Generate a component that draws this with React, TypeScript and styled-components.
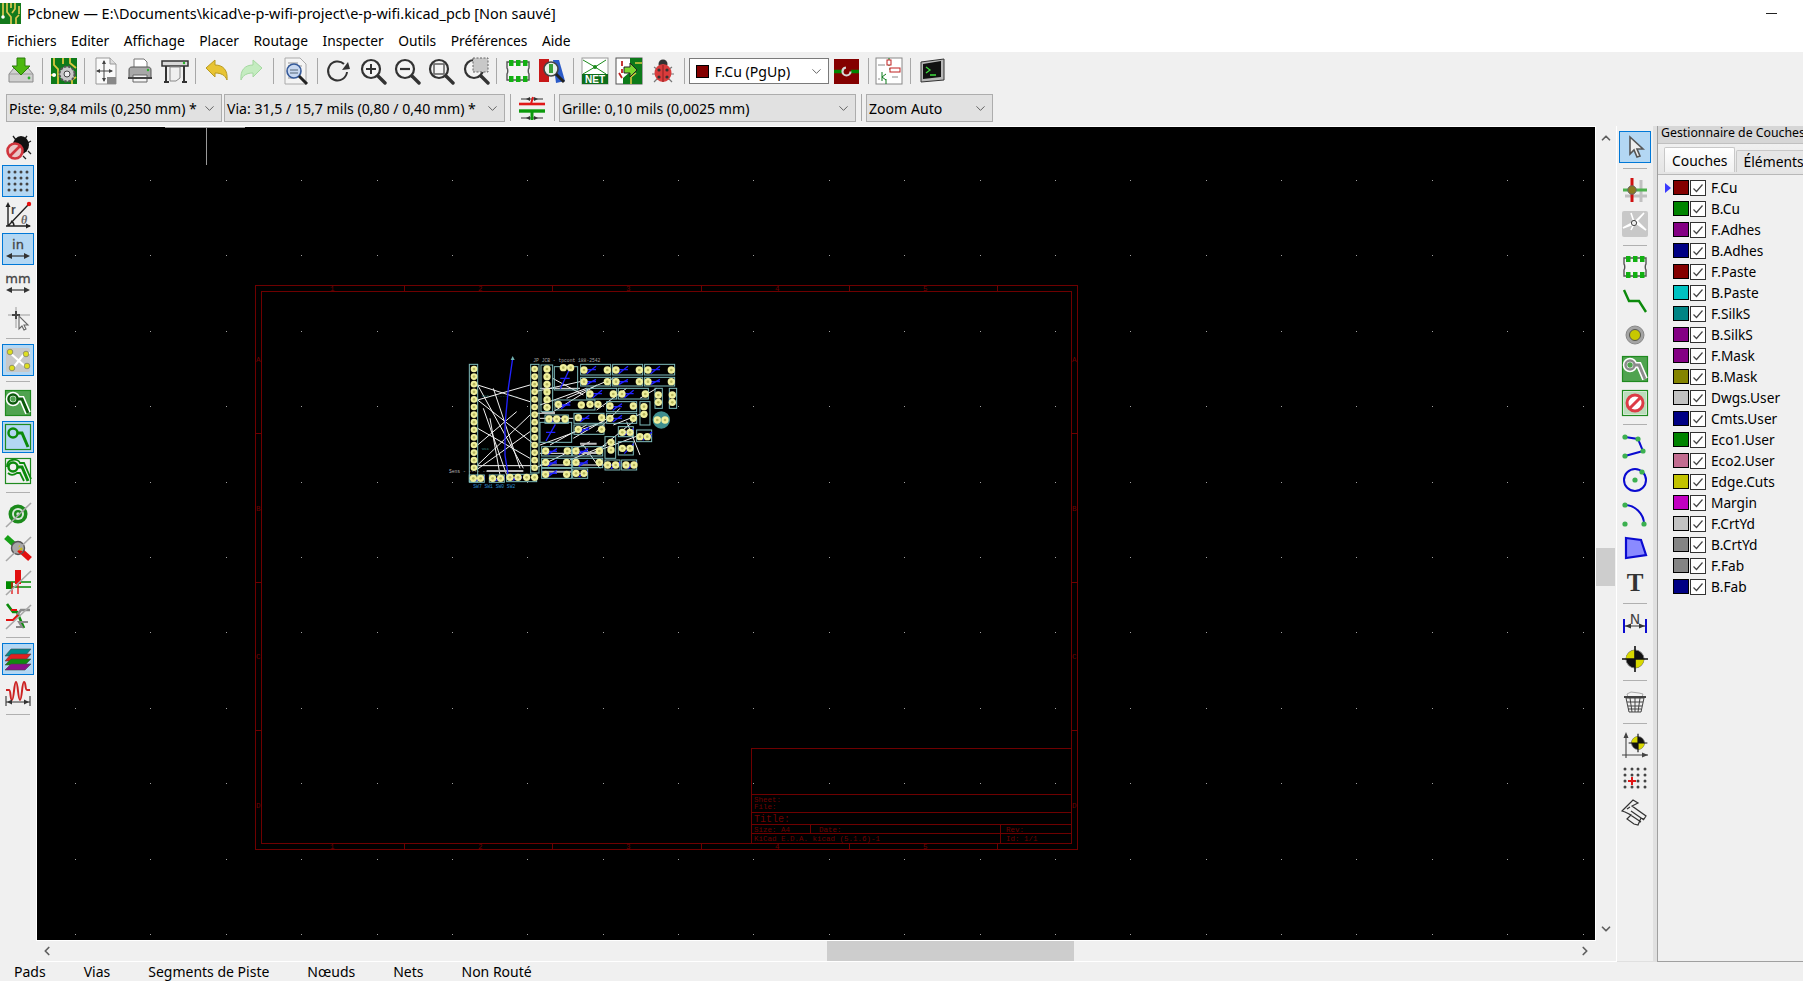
import React, { ReactNode } from "react"
import { ChevronDown, ChevronLeft, ChevronRight, ChevronUp } from "lucide-react"
import styled, { createGlobalStyle } from "styled-components"

const UI_FONT = `"Noto Sans", "Open Sans", sans-serif`

const GlobalStyle = createGlobalStyle`
  html, body { margin: 0; padding: 0; background: #f0f0f0; overflow: hidden; }
  body { font-family: ${UI_FONT}; color: #000; }
  * { box-sizing: border-box; }
`

const Window = styled.div`
  width: 1803px;
  height: 981px;
  display: flex;
  flex-direction: column;
  overflow: hidden;
  background: #f0f0f0;
`
const TitleBar = styled.div`
  height: 26px;
  flex: none;
  background: #fff;
  display: flex;
  align-items: center;
  font-size: 14.45px;
  padding: 1px 26px 0 0;
  svg { flex: none; margin-right: 6px; }
`
const TitleText = styled.span`
  flex: 1;
`
const Minimize = styled.span`
  width: 11px;
  height: 1px;
  background: #222;
`
const MenuBar = styled.div`
  height: 26px;
  flex: none;
  background: #fff;
  display: flex;
  align-items: center;
  padding: 3px 0 0 7px;
  gap: 14.5px;
  font-size: 13.8px;
`
const MainToolbar = styled.div`
  height: 38px;
  flex: none;
  display: flex;
  align-items: center;
  padding-left: 4px;
`
const AuxToolbar = styled.div`
  height: 36px;
  flex: none;
  display: flex;
  align-items: flex-start;
  padding: 4px 0 0 6px;
`
const HButton = styled.span`
  width: 34.2px;
  height: 32px;
  flex: none;
  display: flex;
  align-items: center;
  justify-content: center;
`
const HSep = styled.span<{ $wide?: boolean }>`
  width: ${(p) => (p.$wide ? 10.7 : 8.4)}px;
  height: 26px;
  flex: none;
  display: flex;
  justify-content: center;
  &::before { content: ""; width: 1px; background: #a8a8a8; }
`
const Combo = styled.div<{ $width: number; $white?: boolean; $after?: number }>`
  width: ${(p) => p.$width}px;
  height: 28px;
  flex: none;
  margin-right: ${(p) => p.$after ?? 0}px;
  display: flex;
  align-items: center;
  justify-content: space-between;
  padding: 0 4px 0 2px;
  font-size: 14.1px;
  white-space: nowrap;
  background: ${(p) => (p.$white ? "#fff" : "#e1e1e1")};
  border: ${(p) => (p.$white ? "1px solid #7a7a7a" : "1px solid #adadad")};
  svg { color: #444; flex: none; }
`
const LayerCombo = styled(Combo)`
  height: 26px;
  margin: 0 1px 0 0;
  padding-left: 6px;
`
const ComboLabel = styled.span`
  display: flex;
  align-items: center;
  gap: 6px;
`
const ComboSwatch = styled.span`
  width: 13px;
  height: 13px;
  background: #840000;
  border: 1px solid #000;
`
const AuxSep = styled.span`
  width: 10px;
  height: 27px;
  flex: none;
  display: flex;
  justify-content: center;
  &::before { content: ""; width: 1px; background: #a8a8a8; }
`
const AuxIcon = styled.span`
  width: 34px;
  height: 28px;
  flex: none;
  display: flex;
  align-items: center;
  justify-content: center;
`
const Body = styled.div`
  height: 836px;
  flex: none;
  display: flex;
`
const SideToolbar = styled.div`
  width: 36px;
  flex: none;
  padding-top: 4px;
  display: flex;
  flex-direction: column;
  align-items: center;
`
const RightToolbar = styled(SideToolbar)`
  border-bottom: 1px solid #e0e0e0;
`
const SideButton = styled.span<{ $active?: boolean }>`
  width: 32px;
  height: 32px;
  margin: 1px 0;
  flex: none;
  display: flex;
  align-items: center;
  justify-content: center;
  background: ${(p) => (p.$active ? "#b3d7f3" : "transparent")};
  border: 1px solid ${(p) => (p.$active ? "#0078d7" : "transparent")};
`
const SideSep = styled.span`
  width: 24px;
  height: 1px;
  margin: 4px 0;
  flex: none;
  background: #b0b0b0;
`
const CanvasFrame = styled.div`
  width: 1581px;
  flex: none;
  display: grid;
  grid-template-columns: 1fr 20px;
  grid-template-rows: 1fr 20px;
  border-right: 1px solid #fff;
  border-bottom: 1px solid #fff;
`
const Canvas = styled.div`
  background: #000;
  border: 1px solid #fff;
  overflow: hidden;
  svg { display: block; }
`
const VScroll = styled.div`
  position: relative;
  display: flex;
  flex-direction: column;
  align-items: center;
  justify-content: space-between;
  padding: 5px 0;
  color: #606060;
`
const VThumb = styled.span`
  position: absolute;
  top: 422px;
  left: 0;
  width: 19px;
  height: 38px;
  background: #cdcdcd;
`
const HScroll = styled.div`
  position: relative;
  display: flex;
  align-items: center;
  justify-content: space-between;
  padding: 0 4px;
  color: #606060;
`
const HThumb = styled.span`
  position: absolute;
  left: 791px;
  top: 0;
  width: 247px;
  height: 20px;
  background: #cdcdcd;
`
const Sash = styled.div`
  width: 4px;
  flex: none;
  background: #e0e0e0;
`
const LayerPanel = styled.div`
  flex: 1;
  min-width: 0;
  overflow: hidden;
  display: flex;
  flex-direction: column;
  border-left: 1px solid #a0a0a0;
  border-bottom: 1px solid #a0a0a0;
`
const PanelCaption = styled.div`
  height: 17px;
  flex: none;
  padding-left: 3px;
  font-size: 12.3px;
  line-height: 13px;
  white-space: nowrap;
  background: #d6d6d6;
`
const TabRow = styled.div`
  height: 32px;
  flex: none;
  display: flex;
  align-items: flex-end;
  padding: 0 0 2px 6px;
  border-top: 1px solid #c0c0c0;
  border-bottom: 1px solid #b8b8b8;
  background: linear-gradient(#f0f0f0, #e4e4e4);
`
const Tab = styled.div<{ $active?: boolean }>`
  height: ${(p) => (p.$active ? 25 : 22)}px;
  padding: 0 6px 0 7px;
  margin-right: 1px;
  font-size: 13.9px;
  display: flex;
  align-items: center;
  white-space: nowrap;
  border: 1px solid #c8c8c8;
  border-bottom: none;
  border-radius: 2px 2px 0 0;
  background: ${(p) => (p.$active ? "linear-gradient(#fff, #f0f0f0)" : "#e6e6e6")};
`
const LayerList = styled.div`
  padding: 2px 0 0 7px;
`
const LayerRow = styled.div`
  height: 21.03px;
  display: flex;
  align-items: center;
  font-size: 13.7px;
`
const ActiveMark = styled.span<{ $on: boolean }>`
  width: 0;
  height: 0;
  flex: none;
  margin-right: 2px;
  border-top: 5px solid transparent;
  border-bottom: 5px solid transparent;
  border-left: 6px solid ${(p) => (p.$on ? "#3a3aff" : "transparent")};
`
const Swatch = styled.span<{ $color: string }>`
  width: 16px;
  height: 15px;
  flex: none;
  background: ${(p) => p.$color};
  border: 1px solid #000;
`
const Check = styled.span`
  width: 16px;
  height: 16px;
  flex: none;
  margin: 0 5px 0 1px;
  display: flex;
  align-items: center;
  justify-content: center;
  background: #fff;
  border: 1px solid #333;
`
const StatusBar = styled.div`
  height: 19px;
  flex: none;
  display: flex;
  align-items: center;
  padding-left: 14px;
  gap: 38px;
  font-size: 14px;
`

const Svg = ({ children, size = 28 }: { children: ReactNode; size?: number }) => (
  <svg width={size} height={size} viewBox="0 0 28 28" fill="none">
    {children}
  </svg>
)

const Magnifier = ({ children }: { children?: ReactNode }) => (
  <Svg>
    <circle cx="12" cy="12" r="9" fill="#f4f4f4" stroke="#333" strokeWidth="2.2" />
    <path d="M19 19l7 7" stroke="#333" strokeWidth="3.4" strokeLinecap="round" />
    {children}
  </Svg>
)

const Ladybug = () => (
  <Svg>
    <path d="M5 10l4 3M23 10l-4 3M3 17h5M25 17h-5M5 25l4-4M23 25l-4-4" stroke="#777" strokeWidth="1.2" />
    <circle cx="14" cy="7" r="4.5" fill="#333" />
    <ellipse cx="14" cy="16" rx="8.5" ry="9" fill="#d93c3c" />
    <path d="M14 8v17" stroke="#8b2020" />
    <circle cx="10" cy="13" r="1.6" fill="#333" />
    <circle cx="18" cy="13" r="1.6" fill="#333" />
    <circle cx="10" cy="20" r="1.6" fill="#333" />
    <circle cx="18" cy="20" r="1.6" fill="#333" />
  </Svg>
)

const BugOff = () => (
  <Svg>
    <path d="M12 7l-3-4M20 7l3-4M22 11l5-3M24 18l3 3M19 23l3 3" stroke="#222" strokeWidth="1.3" />
    <ellipse cx="17" cy="12" rx="8" ry="9" fill="#111" />
    <circle cx="11" cy="18" r="7.5" fill="#e9c6c6" stroke="#d0343c" strokeWidth="2.6" />
    <path d="M6 23l10-10" stroke="#d0343c" strokeWidth="2.6" />
  </Svg>
)

const GridDots = () => (
  <Svg>
    {[5, 11, 17, 23].map((y) =>
      [5, 11, 17, 23].map((x) => <circle key={`${x}-${y}`} cx={x} cy={y} r="1.5" fill="#444" />)
    )}
  </Svg>
)

const Polar = () => (
  <Svg>
    <path d="M4 25V4M2 25h24M4 25L24 4M10 25c0-3-1-4-3-5" stroke="#222" strokeWidth="1.4" />
    <path d="M4 1l-2.5 5h5zM27 25l-5-2.5v5z" fill="#222" />
    <circle cx="25" cy="3" r="2.2" fill="#e81010" />
    <text x="7" y="13" fontSize="12" fontWeight="700" fontFamily="Liberation Sans" fill="#444">r</text>
    <text x="17" y="23" fontSize="12" fontWeight="700" fontStyle="italic" fontFamily="Liberation Serif" fill="#666">θ</text>
  </Svg>
)

const UnitIcon = ({ label }: { label: string }) => (
  <Svg>
    <text x="14" y="14" textAnchor="middle" fontSize="13" fontWeight="400" stroke="#444" strokeWidth=".3" fontFamily="DejaVu Sans" fill="#444">{label}</text>
    <path d="M4 21h20" stroke="#333" strokeWidth="1.2" />
    <path d="M2 21l6-3v6zM26 21l-6-3v6z" fill="#333" />
  </Svg>
)

const CursorCross = () => (
  <Svg>
    <path d="M4 12h22M12 4v21" stroke="#b8b8b8" strokeWidth="1.5" />
    <path d="M8 12h8M12 8v8" stroke="#444" strokeWidth="2" />
    <path d="M15 13v13l3-3 2 4 2-1-2-4h4z" fill="#f4f4f4" stroke="#666" strokeWidth="1.1" />
  </Svg>
)

const Ratsnest = () => (
  <Svg>
    <rect x="2" y="2" width="24" height="24" rx="2" fill="#c8c8c8" />
    <path d="M5 6l18 16M9 22l11-14 6-1" stroke="#fff" strokeWidth="2.2" />
    <circle cx="6" cy="6" r="2.8" fill="#dede20" stroke="#666" strokeWidth=".6" />
    <circle cx="22" cy="8" r="2.8" fill="#dede20" stroke="#666" strokeWidth=".6" />
    <circle cx="8" cy="22" r="2.8" fill="#dede20" stroke="#666" strokeWidth=".6" />
    <circle cx="23" cy="20" r="2.8" fill="#dede20" stroke="#666" strokeWidth=".6" />
  </Svg>
)

// pad-and-track glyph: solid zone with a white halo, or open frame with an outline copy
const ZoneIcon = ({ bg, track, halo, outline }: { bg: string; track: string; halo?: boolean; outline?: boolean }) => (
  <Svg>
    <rect x="1.5" y="1.5" width="25" height="25" fill={bg} stroke="#1f8a1f" strokeWidth="1.2" />
    {halo && (
      <>
        <circle cx="9" cy="10" r="5" stroke="#fff" strokeWidth="4.5" />
        <path d="M13 10h5l6 14" stroke="#fff" strokeWidth="6" />
      </>
    )}
    <circle cx="9" cy="10" r="4.5" stroke={track} strokeWidth="2.5" />
    <path d="M13 10h5l6 14" stroke={track} strokeWidth="3" />
    {outline && <path d="M3 10c0-9 11-9 13-4h4l7 16M4 16c3 3 6 2 9 0h3l4 8" stroke={track} strokeWidth="1.8" />}
  </Svg>
)

const SlashFrame = ({ children }: { children: ReactNode }) => (
  <Svg>
    {children}
    <path d="M2 27L27 3" stroke="#a8a8a8" strokeWidth="1.6" />
  </Svg>
)

const ViasOff = () => (
  <SlashFrame>
    <circle cx="14" cy="14" r="9.5" fill="#1b8a1b" />
    <circle cx="14" cy="14" r="6" fill="#d8e8d8" />
    <circle cx="14" cy="14" r="4" fill="#1b8a1b" />
    <circle cx="14" cy="14" r="1.7" fill="#d8e8d8" />
  </SlashFrame>
)

const ViaCross = () => (
  <SlashFrame>
    <path d="M2 3l11 10" stroke="#17a017" strokeWidth="5.5" />
    <path d="M15 15l11 10" stroke="#e21010" strokeWidth="5.5" />
    <circle cx="14" cy="14" r="6.5" fill="#a8a8a8" stroke="#555" strokeWidth="1.4" />
    <path d="M15 11l4 4-5 4z" fill="#c8b820" />
    <path d="M12 16l4 4 3-3z" fill="#e21010" />
  </SlashFrame>
)

const ZoneFill = () => (
  <SlashFrame>
    <rect x="2" y="14" width="7" height="7" fill="#008a00" />
    <path d="M2 14h25M2 19h25" stroke="#008a00" strokeWidth="1.3" />
    <rect x="11" y="2" width="6" height="14" fill="#e21010" />
    <path d="M8 14v12M14 14v12" stroke="#e21010" strokeWidth="1.3" />
  </SlashFrame>
)

const TraceOff = () => (
  <SlashFrame>
    <path d="M3 2l6 8h4l7 16" stroke="#0c8a0c" strokeWidth="2.6" />
    <path d="M26 8h-9l-4 5" stroke="#8a8a8a" strokeWidth="2.6" />
    <path d="M2 18h7l5-5M7 8h6" stroke="#e21010" strokeWidth="2.2" />
    <path d="M12 25h6l-3-5h9" stroke="#8a8a8a" strokeWidth="2.2" />
  </SlashFrame>
)

const LayerStack = () => (
  <Svg>
    <path d="M7 4h20l-6 7H1z" fill="#008a8a" stroke="#444" strokeWidth=".6" />
    <path d="M7 9h20l-6 7H1z" fill="#e02020" stroke="#444" strokeWidth=".6" />
    <path d="M7 14h20l-6 6H1z" fill="#108a10" stroke="#444" strokeWidth=".6" />
    <path d="M7 19h20l-6 6H1z" fill="#8a108a" stroke="#444" strokeWidth=".6" />
  </Svg>
)

const Meander = () => (
  <Svg>
    <path d="M2 11h3c2 0 1 10 3 10s2-18 4-18 2 18 4 18 2-18 4-18 1 8 3 8h3" stroke="#c22" strokeWidth="2" />
    <path d="M2 17v10M26 17v10M2 23h24" stroke="#333" strokeWidth="1.1" />
    <path d="M3 23l5-2.5v5zM25 23l-5-2.5v5z" fill="#333" />
  </Svg>
)

const Pointer = () => (
  <Svg>
    <path d="M9 4v17l4-4 3 7 3-1-3-7h6z" fill="#eee" stroke="#555" strokeWidth="1.6" />
  </Svg>
)

const HighlightNet = () => (
  <Svg>
    <path d="M4 20h22M20 4v22" stroke="#c0c0c0" strokeWidth="3" />
    <path d="M2 14h24" stroke="#4cb04c" strokeWidth="3" />
    <path d="M11 2v24" stroke="#d01010" strokeWidth="3" />
    <circle cx="11" cy="14" r="4.2" fill="#8a7a20" stroke="#666" />
  </Svg>
)

const LocalRats = () => (
  <Svg>
    <rect x="1" y="1" width="26" height="26" rx="2" fill="#c8c8c8" />
    <path d="M10 3l3 9-11 6 13-5 10 7-9-9 7-8-9 9-4 8" stroke="#fff" strokeWidth="1.6" />
    <circle cx="13" cy="13" r="2.6" fill="#eee" stroke="#444" />
  </Svg>
)

const Footprint = () => (
  <Svg>
    <path d="M3 5h22v6c-1 1-1 5 0 6v6H3v-6c1-1 1-5 0-6z" fill="#f4f4f4" stroke="#555" strokeWidth="1.4" />
    {[5, 12, 19].map((x) => (
      <React.Fragment key={x}>
        <rect x={x} y="3" width="4.5" height="6" fill="#12b012" />
        <rect x={x} y="19" width="4.5" height="6" fill="#12b012" />
      </React.Fragment>
    ))}
  </Svg>
)

const GreenTrack = () => (
  <Svg>
    <path d="M3 3l5 11h10l7 11" stroke="#0c8a0c" strokeWidth="2.4" />
  </Svg>
)

const ViaIcon = () => (
  <Svg>
    <circle cx="14" cy="14" r="9" fill="#a4a4a4" stroke="#888" />
    <circle cx="14" cy="14" r="5.5" fill="#c8c800" stroke="#555" />
  </Svg>
)

const Keepout = () => (
  <Svg>
    <rect x="1.5" y="1.5" width="25" height="25" fill="#e8f2e8" stroke="#1f8a1f" strokeWidth="1.2" />
    <rect x="3" y="3" width="22" height="22" fill="#bcdcbc" />
    <circle cx="14" cy="14" r="8" fill="#fff" stroke="#dc3c46" strokeWidth="3" />
    <path d="M8 20l12-12" stroke="#dc3c46" strokeWidth="3" />
  </Svg>
)

const Dot = ({ x, y }: { x: number; y: number }) => <circle cx={x} cy={y} r="2.6" fill="#3cb050" />

const GraphicLine = () => (
  <Svg>
    <path d="M4 5l13 2 5 12-18 5" stroke="#0a0ad0" strokeWidth="2" />
    <Dot x={4} y={5} /><Dot x={17} y={7} /><Dot x={22} y={19} /><Dot x={4} y={24} />
  </Svg>
)

const GraphicCircle = () => (
  <Svg>
    <circle cx="14" cy="14" r="11" stroke="#0a0ad0" strokeWidth="2" />
    <Dot x={14} y={14} /><Dot x={21} y={6} />
  </Svg>
)

const GraphicArc = () => (
  <Svg>
    <path d="M4 5c10 0 19 9 19 19" stroke="#0a0ad0" strokeWidth="2" />
    <Dot x={4} y={5} /><Dot x={4} y={24} /><Dot x={23} y={24} />
  </Svg>
)

const GraphicPoly = () => (
  <Svg>
    <path d="M5 4l15 2 5 15-20 3z" fill="#8a8aff" stroke="#0a0ad0" strokeWidth="2.2" />
  </Svg>
)

const TextTool = () => (
  <Svg>
    <text x="14" y="23" textAnchor="middle" fontSize="25" fontWeight="700" fontFamily="Liberation Serif" fill="#333">T</text>
  </Svg>
)

const Dimension = () => (
  <Svg>
    <text x="14" y="13" textAnchor="middle" fontSize="14" fontFamily="DejaVu Sans" fill="#444">N</text>
    <path d="M3 8v14M25 8v14" stroke="#0a0ad0" strokeWidth="2" />
    <path d="M4 15h20" stroke="#333" />
    <path d="M4 15l6-2.5v5zM24 15l-6-2.5v5z" fill="#333" />
  </Svg>
)

const Target = ({ s = 1 }: { s?: number }) => (
  <g transform={`translate(14 14) scale(${s})`}>
    <circle r="9" fill="#111" stroke="#777" />
    <path d="M0 0V-9A9 9 0 0 0-9 0zM0 0V9A9 9 0 0 0 9 0z" fill="#d8d800" />
    <path d="M-13 0H13M0-13V13" stroke="#111" strokeWidth="1.6" />
  </g>
)

const Trash = () => (
  <Svg>
    <path d="M6 6l4-2 8 1 4 1-1 3H7z" fill="#f4f4f4" stroke="#aaa" />
    <path d="M3 9h22" stroke="#333" strokeWidth="1.8" />
    <path d="M5 10l3 14h12l3-14zM9 10l2 14M14 10v14M19 10l-2 14M6 14h16M7 18h14M7 21h13" stroke="#444" strokeWidth="1" />
  </Svg>
)

const OriginTool = () => (
  <Svg>
    <path d="M5 3v24M1 24h26" stroke="#444" strokeWidth="1.1" />
    <path d="M5 1l-2.5 6h5zM27 24l-6-2.5v5z" fill="#444" />
    <g transform="translate(3 -2)"><Target s={0.72} /></g>
  </Svg>
)

const GridOrigin = () => (
  <Svg>
    {[4, 10, 16, 22].map((y) =>
      [4, 11, 17, 24].map((x) => <circle key={`${x}-${y}`} cx={x} cy={y} r="1.5" fill="#444" />)
    )}
    <path d="M7 16h8M11 12v8" stroke="#e01818" strokeWidth="2" />
  </Svg>
)

const Caliper = () => (
  <Svg>
    <path d="M1 12L12 1l5 3-6 3 14 10-2 3-3-1-3 7-4-1-7-5 4-4-6-3zM6 10l3-2M8 15l12 8M10 12l13 9" stroke="#333" strokeWidth="1.2" />
  </Svg>
)

const SaveIcon = () => (
  <Svg>
    <path d="M2 17l5-6h14l5 6v8H2z" fill="#d0d0d0" stroke="#8a8a8a" />
    <path d="M2 17h24" stroke="#9a9a9a" />
    <path d="M10 1h8v8h5l-9 9-9-9h5z" fill="#4db810" stroke="#2c7c0c" />
    <circle cx="22" cy="21" r="1.4" fill="#2caf2c" />
  </Svg>
)

const BoardSetup = () => (
  <Svg>
    <rect x="1" y="1" width="26" height="26" fill="#0d7a1a" />
    <path d="M4 1v7l4 4v15M13 1v6M20 1v5l6 5M1 18h5M22 27v-4l4-3" stroke="#d8c840" strokeWidth="1.8" />
    <circle cx="4" cy="18" r="2" fill="#fff" />
    <circle cx="17" cy="17" r="7.5" fill="#c8c8c8" stroke="#555" strokeDasharray="2.5 1.5" strokeWidth="2" />
    <circle cx="17" cy="17" r="3" fill="#eee" stroke="#444" />
  </Svg>
)

const PageIcon = () => (
  <Svg>
    <path d="M4 1h14l6 6v20H4z" fill="#fafafa" stroke="#999" />
    <path d="M18 1v6h6" fill="#ddd" stroke="#999" />
    <path d="M12 4v20M5 14h15" stroke="#444" />
    <path d="M12 3l-2 4h4zM12 25l-2-4h4zM4 14l4-2v4zM21 14l-4-2v4z" fill="#444" />
    <rect x="15" y="20" width="9" height="7" fill="#888" />
  </Svg>
)

const PrintIcon = () => (
  <Svg>
    <path d="M8 2h10l3 3v7H8z" fill="#fff" stroke="#777" />
    <path d="M3 13c0-2 1-3 3-3h16c2 0 3 1 3 3v8H3z" fill="#a8a8a8" stroke="#555" />
    <path d="M7 18h14v7H7z" fill="#f4f4f4" stroke="#666" />
    <path d="M2 21h24" stroke="#444" strokeWidth="2" />
    <circle cx="22" cy="13" r="1.2" fill="#2bb32b" />
  </Svg>
)

const PlotIcon = () => (
  <Svg>
    <path d="M1 4h26v5H1z" fill="#d8d8d8" stroke="#333" strokeWidth="1.5" />
    <path d="M5 9v16M23 9v16M3 25h5M21 25h5" stroke="#333" strokeWidth="2" />
    <path d="M9 10h10v11l-4 3H9z" fill="#f0f0f0" stroke="#888" />
    <circle cx="23" cy="6" r="1.2" fill="#28b428" />
  </Svg>
)

const UndoIcon = ({ color, edge, flip }: { color: string; edge: string; flip?: boolean }) => (
  <Svg>
    <path
      d="M3 11l9-8v5c8 0 13 5 12 15-2-5-6-7-12-7v4z"
      fill={color}
      stroke={edge}
      transform={flip ? "translate(28 0) scale(-1 1)" : undefined}
    />
  </Svg>
)

const FindIcon = () => (
  <Svg>
    <path d="M3 1h15l6 6v20H3z" fill="#f4f4f4" stroke="#aaa" />
    <path d="M6 6h10M6 9h14M6 21h6" stroke="#999" />
    <circle cx="12" cy="14" r="7" fill="#c8d8f0" stroke="#355a9a" strokeWidth="1.6" />
    <path d="M8 13h8M8 16h8" stroke="#567" />
    <path d="M17 19l8 8" stroke="#222" strokeWidth="3" />
  </Svg>
)

const RedrawIcon = () => (
  <Svg>
    <path d="M19 7a9.5 9.5 0 1 0 3 8" stroke="#333" strokeWidth="2" />
    <path d="M17 13l8-1-2-7z" fill="#333" />
  </Svg>
)

const FootprintViewer = () => (
  <Svg>
    <path d="M1 2h10v23H1z" fill="#c81818" />
    <path d="M15 3h6l6 21-9 2z" fill="#2a5ac8" />
    <circle cx="13" cy="12" r="7" fill="#e8f0e8" stroke="#444" strokeWidth="1.6" />
    <path d="M13 7v9" stroke="#3aa03a" strokeWidth="4" />
    <path d="M18 17l8 8" stroke="#222" strokeWidth="3" />
  </Svg>
)

const NetIcon = () => (
  <Svg>
    <rect x="1" y="1" width="26" height="26" fill="#fff" stroke="#999" />
    <path d="M2 3l12 7 11-7M2 17l12-7 11 7" stroke="#1b8a1b" />
    <circle cx="14" cy="10" r="2" fill="#1b8a1b" />
    <rect x="1" y="17" width="26" height="10" fill="#0d6e1a" />
    <text x="14" y="26" textAnchor="middle" fontSize="10" fontWeight="700" fontFamily="Liberation Sans" fill="#fff">NET</text>
  </Svg>
)

const UpdateBoard = () => (
  <Svg>
    <rect x="1" y="1" width="26" height="26" fill="#fff" stroke="#555" />
    <path d="M15 1h12v26H8v-6l7-6z" fill="#0d7a1a" />
    <path d="M20 6h7M16 27v-7l5-4" stroke="#d8c840" strokeWidth="1.6" />
    <path d="M7 4v5M4 16l3 5M7 12v4" stroke="#c02020" strokeWidth="1.8" />
    <path d="M9 10h6V6l7 7-7 7v-4H9z" fill="#7cd830" stroke="#222" />
  </Svg>
)

const ViaLayer = () => (
  <Svg size={25}>
    <rect width="28" height="28" fill="#840000" />
    <path d="M0 14h9M19 14h9" stroke="#008400" strokeWidth="4" />
    <circle cx="14" cy="14" r="4.5" stroke="#d8d8d8" strokeWidth="2.4" strokeDasharray="20 8" />
  </Svg>
)

const SchematicIcon = () => (
  <Svg>
    <rect x="1" y="1" width="26" height="26" fill="#fff" stroke="#888" />
    <path d="M14 1v8M14 12h4M11 22v5M7 15v9M11 17l-4 3 4 3" stroke="#0d7a1a" />
    <rect x="12" y="3" width="4" height="5" fill="#fff" stroke="#c02020" />
    <rect x="15" y="11" width="10" height="4" fill="#fff" stroke="#c02020" />
    <path d="M3 8h7M3 22h2M17 20h6" stroke="#888" />
  </Svg>
)

const TerminalIcon = () => (
  <Svg>
    <path d="M3 5l23-3v21l-23 2z" fill="#b8b8b8" stroke="#333" />
    <path d="M5 7l18-3v16L5 22z" fill="#111" />
    <path d="M8 10l4 3-4 3M12 18h6" stroke="#3fdc3f" strokeWidth="1.3" />
  </Svg>
)

const AppLogo = () => (
  <svg width="21" height="21" viewBox="0 0 21 21">
    <rect width="21" height="21" fill="#147a1c" />
    <path d="M3 0v13M7 0v9l4 5v7M11 0v5M15 0v6l-3 4M19 3v8M16 21v-6l3-3" stroke="#dcc850" strokeWidth="1.7" fill="none" />
    <circle cx="3" cy="14" r="1.8" fill="#fff" />
  </svg>
)

type Tool = ReactNode | "sep" | "wide-sep"
type SideTool = { icon?: ReactNode; active?: boolean }

const topTools1: Tool[] = [
  <SaveIcon />, "sep", <BoardSetup />, "sep", <PageIcon />, <PrintIcon />, <PlotIcon />, "sep",
  <UndoIcon color="#e8c434" edge="#b89a20" />,
  <UndoIcon color="#c4ecc0" edge="#a4d8a0" flip />,
  "wide-sep", <FindIcon />, "sep", <RedrawIcon />,
  <Magnifier><path d="M7 12h10M12 7v10" stroke="#333" strokeWidth="2" /></Magnifier>,
  <Magnifier><path d="M7 12h10" stroke="#333" strokeWidth="2.2" /></Magnifier>,
  <Magnifier><rect x="7" y="7" width="10" height="10" stroke="#666" strokeWidth="1.6" /></Magnifier>,
  <Magnifier><rect x="11" y="1" width="15" height="14" fill="#c8c8c8" stroke="#666" strokeDasharray="2 1.5" /></Magnifier>,
  "sep", <Footprint />, <FootprintViewer />, "sep", <NetIcon />, <UpdateBoard />, <Ladybug />, "sep",
]
const topTools2: Tool[] = ["sep", <SchematicIcon />, "sep", <TerminalIcon />]

const leftTools: (SideTool | "sep")[] = [
  { icon: <BugOff /> },
  { icon: <GridDots />, active: true },
  { icon: <Polar /> },
  { icon: <UnitIcon label="in" />, active: true },
  { icon: <UnitIcon label="mm" /> },
  { icon: <CursorCross /> },
  "sep",
  { icon: <Ratsnest />, active: true },
  "sep",
  { icon: <ZoneIcon bg="#4fa34f" track="#0c5a0c" halo /> },
  { icon: <ZoneIcon bg="transparent" track="#0c8a0c" />, active: true },
  { icon: <ZoneIcon bg="transparent" track="#0c8a0c" outline /> },
  "sep",
  { icon: <ViasOff /> },
  { icon: <ViaCross /> },
  { icon: <ZoneFill /> },
  { icon: <TraceOff /> },
  "sep",
  { icon: <LayerStack />, active: true },
  { icon: <Meander /> },
  "sep",
]

const rightTools: (SideTool | "sep")[] = [
  { icon: <Pointer />, active: true },
  "sep",
  { icon: <HighlightNet /> },
  { icon: <LocalRats /> },
  "sep",
  { icon: <Footprint /> },
  { icon: <GreenTrack /> },
  { icon: <ViaIcon /> },
  { icon: <ZoneIcon bg="#4fa34f" track="#8c8c8c" halo /> },
  { icon: <Keepout /> },
  "sep",
  { icon: <GraphicLine /> },
  { icon: <GraphicCircle /> },
  { icon: <GraphicArc /> },
  { icon: <GraphicPoly /> },
  { icon: <TextTool /> },
  "sep",
  { icon: <Dimension /> },
  { icon: <Svg><Target /></Svg> },
  "sep",
  { icon: <Trash /> },
  "sep",
  { icon: <OriginTool /> },
  { icon: <GridOrigin /> },
  { icon: <Caliper /> },
]

const layers: [string, string][] = [
  ["F.Cu", "#840000"], ["B.Cu", "#008400"], ["F.Adhes", "#840084"], ["B.Adhes", "#000084"],
  ["F.Paste", "#840000"], ["B.Paste", "#00c2c2"], ["F.SilkS", "#008484"], ["B.SilkS", "#840084"],
  ["F.Mask", "#840084"], ["B.Mask", "#848400"], ["Dwgs.User", "#c2c2c2"], ["Cmts.User", "#000084"],
  ["Eco1.User", "#008400"], ["Eco2.User", "#c26c90"], ["Edge.Cuts", "#c2c200"], ["Margin", "#c200c2"],
  ["F.CrtYd", "#c2c2c2"], ["B.CrtYd", "#848484"], ["F.Fab", "#848484"], ["B.Fab", "#000084"],
]

const menus = ["Fichiers", "Editer", "Affichage", "Placer", "Routage", "Inspecter", "Outils", "Préférences", "Aide"]
const statusItems = ["Pads", "Vias", "Segments de Piste", "Nœuds", "Nets", "Non Routé"]

const SHEET = "#6e0000"

// rect [x, y, w, h] then its pads, in units of 1/3 px from the board's corner
const modules: [number, number, number, number, [number, number][]][] = [
  [303, 60, 35, 140, [[321, 72], [321, 95], [321, 118], [321, 141], [321, 164], [321, 187]]],
  [343, 65, 70, 70, [[370, 68], [392, 68]]],
  [422, 58, 90, 32, [[432, 75], [502, 75]]],
  [518, 58, 90, 32, [[528, 75], [598, 75]]],
  [614, 58, 90, 32, [[624, 75], [694, 75]]],
  [422, 97, 90, 26, [[432, 110], [502, 110]]],
  [518, 97, 90, 26, [[528, 110], [598, 110]]],
  [614, 97, 90, 26, [[624, 110], [694, 110]]],
  [440, 130, 90, 32, [[450, 147], [520, 147]]],
  [535, 130, 90, 32, [[546, 147], [616, 147]]],
  [345, 165, 120, 30, [[355, 178], [424, 180], [450, 178], [474, 178]]],
  [500, 170, 90, 30, [[510, 183], [580, 183]]],
  [645, 130, 22, 60, [[655, 150], [655, 172]]],
  [688, 130, 22, 60, [[697, 150], [697, 172]]],
  [600, 170, 30, 70, [[612, 185], [612, 208]]],
  [402, 205, 90, 30, [[415, 218], [485, 218]]],
  [500, 205, 90, 30, [[510, 220], [580, 220]]],
  [315, 210, 70, 25, [[327, 222], [350, 222], [375, 222]]],
  [300, 232, 95, 60, []],
  [402, 240, 90, 28, [[415, 253], [485, 253]]],
  [535, 245, 45, 30, [[547, 262], [570, 262]]],
  [590, 255, 45, 35, [[600, 275], [622, 275]]],
  [495, 275, 32, 65, [[513, 292], [513, 315]]],
  [535, 290, 45, 40, [[547, 310], [570, 310]]],
  [305, 305, 90, 28, [[317, 318], [382, 318]]],
  [398, 305, 90, 28, [[408, 318], [478, 318]]],
  [305, 340, 90, 28, [[317, 352], [380, 352]]],
  [398, 340, 90, 28, [[408, 352], [478, 352]]],
  [305, 370, 90, 30, [[317, 388], [380, 388]]],
  [398, 372, 45, 28, [[408, 385], [432, 385]]],
  [495, 345, 45, 30, [[503, 360], [527, 360]]],
  [545, 345, 45, 30, [[558, 360], [582, 360]]],
  [88, 390, 45, 22, [[100, 400], [122, 400]]],
  [148, 390, 45, 22, [[158, 400], [182, 400]]],
  [200, 388, 90, 22, [[210, 397], [234, 397], [260, 397], [284, 397]]],
]

const headerPads = Array.from({ length: 14 }, (_, i) => 72 + i * 22.8)
const ratsnest = [
  "M113 120L270 170M113 165L270 120M113 165L285 300M113 120L250 370M130 190L200 390M150 220L180 390",
  "M113 360L270 210M113 372L270 260M290 362H113M285 140L420 110M300 180L440 130M300 300L490 230",
  "M285 370L450 290M300 220H400M480 310L580 230M113 250L270 340M113 300L230 200M160 130L240 370",
  "M300 130H420M380 160L520 100M330 300L440 240M470 260L540 190M390 345L500 300M440 330L600 270",
  "M338 100L430 150M340 200L470 120M400 280L520 210M300 325H480M300 360H500M470 195L560 130",
  "M520 240L620 200M430 300L480 370M560 230L600 330M290 205H340M600 160L650 130",
].join("")

const Board = () => (
  <g transform="translate(440 345) scale(0.3333)">
    <path d={ratsnest} stroke="#f4f4f4" strokeWidth="3" />
    <path d="M305 204H345M305 380H395M420 296H470M420 324H470M140 378H250" stroke="#bdbdbd" strokeWidth="6" />
    <rect x="88" y="58" width="25" height="352" stroke="#7fbcbc" strokeWidth="3" />
    <rect x="272" y="58" width="25" height="326" stroke="#7fbcbc" strokeWidth="3" />
    <circle cx="664" cy="225" r="26" fill="#3f8f8f" />
    <path d="M218 40L205 130L195 240V330L205 395" stroke="#2222ff" strokeWidth="4" />
    <path d="M218 33l-6 12h12z" fill="#6fb0b0" />
    {modules.map(([x, y, w, h], i) => (
      <g key={i}>
        <rect x={x} y={y} width={w} height={h} stroke="#7fbcbc" strokeWidth="3" />
        {w >= 45 && (
          <path
            d={`M${x + 18} ${y + h - 4}L${x + 46} ${y + 6}M${x + 18} ${y + h / 2}h28`}
            stroke="#2222ff"
            strokeWidth="4"
          />
        )}
      </g>
    ))}
    {headerPads.map((y) => (
      <React.Fragment key={y}>
        <circle cx="102" cy={y} r="10" fill="#efef9c" />
        <circle cx="102" cy={y} r="4" fill="#b8b860" />
        <circle cx="284" cy={y} r="10" fill="#efef9c" />
        <circle cx="284" cy={y} r="4" fill="#b8b860" />
      </React.Fragment>
    ))}
    {[...modules, [0, 0, 0, 0, [[652, 225], [675, 225]]] as (typeof modules)[number]].flatMap(([, , , , pads], i) =>
      pads.map(([x, y], j) => (
        <React.Fragment key={`${i}-${j}`}>
          <circle cx={x} cy={y} r="11" fill="#efef9c" />
          <circle cx={x} cy={y} r="4" fill="#b8b860" />
        </React.Fragment>
      ))
    )}
    <text x="27" y="384" fontSize="14" fontFamily="Liberation Mono" fill="#bbb">Sens - ---- ----</text>
    <text x="280" y="50" fontSize="14" fontFamily="Liberation Mono" fill="#aaa">JP JCB - tpcont 188-2542</text>
    <text x="125" y="156" fontSize="13" fontFamily="Liberation Mono" fill="#3f8f8f">Vcc - ---- ---</text>
    <text x="125" y="314" fontSize="13" fontFamily="Liberation Mono" fill="#3f8f8f">Vcc - ---- ---</text>
    <text x="100" y="428" fontSize="14" fontFamily="Liberation Mono" fill="#2c8cd0">SW7  SW1  SW0  SW2</text>
  </g>
)

const gridPath = () => {
  let d = ""
  for (let i = 0; i < 21; i++) {
    for (let j = 0; j < 11; j++) {
      const x = Math.round(75.1 + i * 75.375)
      const y = Math.round(180 + j * 75.4)
      d += `M${x} ${y}h1v1h-1z`
    }
  }
  return d
}

const sheetTicks = () => {
  let d = ""
  for (let x = 404; x < 1071; x += 148.3) {
    const px = Math.round(x) + 0.5
    d += `M${px} 285.5V291.5M${px} 843.5V849.5`
  }
  for (let y = 433; y < 843; y += 148.6) {
    const py = Math.round(y) + 0.5
    d += `M255.5 ${py}H261.5M1071.5 ${py}H1077.5`
  }
  return d
}

const SheetText = ({ x, y, size = 7.5, children }: { x: number; y: number; size?: number; children: ReactNode }) => (
  <text x={x} y={y} fontSize={size} fontFamily="Liberation Mono" fill={SHEET}>{children}</text>
)

const Drawing = () => (
  <svg width="1558" height="813" viewBox="37 127 1558 813" fill="none" shapeRendering="crispEdges">
    <path d={gridPath()} fill="#a0a0a0" />
    <path d="M165 127.5H245M206.5 127V165" stroke="#9a9a9a" />
    <g stroke={SHEET}>
      <rect x="255.5" y="285.5" width="822" height="564" />
      <rect x="261.5" y="291.5" width="810" height="552" />
      <path d={sheetTicks()} />
      <path d="M751.5 843V748.5H1071M751.5 794.5H1071M751.5 812.5H1071M751.5 824.5H1071M751.5 833.5H1071M810.5 824.5V833.5M1000.5 824.5V843" />
    </g>
    {[330, 478, 626, 775, 923].map((x, i) => (
      <React.Fragment key={x}>
        <SheetText x={x} y={291}>{i + 1}</SheetText>
        <SheetText x={x} y={849}>{i + 1}</SheetText>
      </React.Fragment>
    ))}
    {["A", "B", "C", "D"].map((l, i) => (
      <React.Fragment key={l}>
        <SheetText x={256} y={362 + i * 148.5}>{l}</SheetText>
        <SheetText x={1072} y={362 + i * 148.5}>{l}</SheetText>
      </React.Fragment>
    ))}
    <SheetText x={754} y={802}>Sheet:</SheetText>
    <SheetText x={754} y={809}>File:</SheetText>
    <SheetText x={754} y={822} size={10}>Title:</SheetText>
    <SheetText x={754} y={832}>Size: A4</SheetText>
    <SheetText x={819} y={832}>Date:</SheetText>
    <SheetText x={1006} y={832}>Rev:</SheetText>
    <SheetText x={754} y={841}>KiCad E.D.A.  kicad (5.1.6)-1</SheetText>
    <SheetText x={1006} y={841}>Id: 1/1</SheetText>
    <g shapeRendering="auto"><Board /></g>
  </svg>
)

const renderSide = (items: (SideTool | "sep")[]) =>
  items.map((t, i) =>
    t === "sep" ? (
      <SideSep key={i} />
    ) : (
      <SideButton key={i} $active={t.active}>{t.icon}</SideButton>
    )
  )

const renderTop = (items: Tool[]) =>
  items.map((t, i) =>
    t === "sep" || t === "wide-sep" ? (
      <HSep key={i} $wide={t === "wide-sep"} />
    ) : (
      <HButton key={i}>{t}</HButton>
    )
  )

const CheckMark = () => (
  <svg width="12" height="12" viewBox="0 0 12 12" fill="none">
    <path d="M1.5 6.5l3 3 6-7" stroke="#444" strokeWidth="1.2" />
  </svg>
)

const TrackWidthIcon = () => (
  <Svg>
    <path d="M3 5h22M3 24h22" stroke="#333" />
    <path d="M8 5l4-2v4zM20 5l-4-2v4zM8 24l4-2v4zM20 24l-4-2v4z" fill="#333" />
    <path d="M1 10h26" stroke="#e01818" strokeWidth="2.6" />
    <path d="M15 3l-2 7" stroke="#e01818" strokeWidth="2" />
    <path d="M1 17h26" stroke="#0c9a0c" strokeWidth="3.4" />
    <path d="M14 17v9" stroke="#0c9a0c" strokeWidth="3" />
  </Svg>
)

export default function App() {
  return (
    <Window>
      <GlobalStyle />
      <TitleBar>
        <AppLogo />
        <TitleText>Pcbnew — E:\Documents\kicad\e-p-wifi-project\e-p-wifi.kicad_pcb [Non sauvé]</TitleText>
        <Minimize />
      </TitleBar>
      <MenuBar>
        {menus.map((m) => <span key={m}>{m}</span>)}
      </MenuBar>
      <MainToolbar>
        {renderTop(topTools1)}
        <LayerCombo $width={140} $white>
          <ComboLabel><ComboSwatch />F.Cu (PgUp)</ComboLabel>
          <ChevronDown size={15} strokeWidth={1.3} />
        </LayerCombo>
        <HButton><ViaLayer /></HButton>
        {renderTop(topTools2)}
      </MainToolbar>
      <AuxToolbar>
        <Combo $width={216} $after={2}>Piste: 9,84 mils (0,250 mm) *<ChevronDown size={15} strokeWidth={1.3} /></Combo>
        <Combo $width={281}>Via: 31,5 / 15,7 mils (0,80 / 0,40 mm) *<ChevronDown size={15} strokeWidth={1.3} /></Combo>
        <AuxSep />
        <AuxIcon><TrackWidthIcon /></AuxIcon>
        <AuxSep />
        <Combo $width={297}>Grille: 0,10 mils (0,0025 mm)<ChevronDown size={15} strokeWidth={1.3} /></Combo>
        <AuxSep />
        <Combo $width={127}>Zoom Auto<ChevronDown size={15} strokeWidth={1.3} /></Combo>
      </AuxToolbar>
      <Body>
        <SideToolbar>{renderSide(leftTools)}</SideToolbar>
        <CanvasFrame>
          <Canvas><Drawing /></Canvas>
          <VScroll>
            <ChevronUp size={14} strokeWidth={3} />
            <VThumb />
            <ChevronDown size={14} strokeWidth={3} />
          </VScroll>
          <HScroll>
            <ChevronLeft size={14} strokeWidth={3} />
            <HThumb />
            <ChevronRight size={14} strokeWidth={3} />
          </HScroll>
          <span />
        </CanvasFrame>
        <RightToolbar>{renderSide(rightTools)}</RightToolbar>
        <Sash />
        <LayerPanel>
          <PanelCaption>Gestionnaire de Couches</PanelCaption>
          <TabRow>
            <Tab $active>Couches</Tab>
            <Tab>Éléments</Tab>
          </TabRow>
          <LayerList>
            {layers.map(([name, color], i) => (
              <LayerRow key={name}>
                <ActiveMark $on={i === 0} />
                <Swatch $color={color} />
                <Check><CheckMark /></Check>
                {name}
              </LayerRow>
            ))}
          </LayerList>
        </LayerPanel>
      </Body>
      <StatusBar>
        {statusItems.map((s) => <span key={s}>{s}</span>)}
      </StatusBar>
    </Window>
  )
}
